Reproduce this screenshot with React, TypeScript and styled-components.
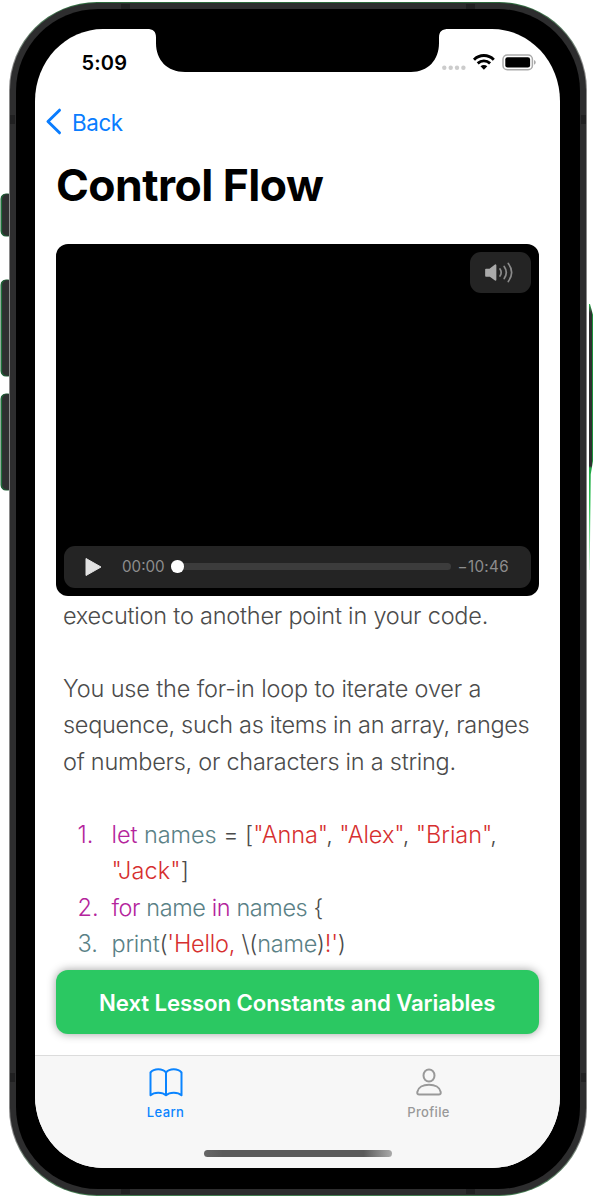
import React from "react";
import styled, { createGlobalStyle, css } from "styled-components";

const Global = createGlobalStyle`
  * { box-sizing: border-box; }
  body { margin: 0; background: #fff; font-family: Inter, "Liberation Sans", sans-serif; }
`;

const Stage = styled.main`
  position: relative;
  width: 594px;
  height: 1197px;
  padding: 2px 7px 1px 9px;
  overflow: hidden;
`;

const SideButton = styled.div<{ $top: number; $height: number }>`
  position: absolute;
  left: 1px;
  top: ${(p) => p.$top}px;
  width: 12px;
  height: ${(p) => p.$height}px;
  border-radius: 5px;
  background: #2f2f30;
  box-shadow: inset 1px 0 1px #1c7a3c, 0 0 0 0.5px #1f5a33;
`;

const PowerButton = styled.div`
  position: absolute;
  left: 588px;
  top: 304px;
  width: 5px;
  height: 266px;
  clip-path: polygon(20% 0, 40% 0, 100% 4%, 100% 59%, 55% 64%, 35% 100%, 20% 100%);
  background: linear-gradient(#2db84f 0, #2f2f30 9px, #2f2f30 162px, #20a544 164px, #2fc355 200px, #c9efd2 266px);
  border-right: 1px solid #1b8f3c;
`;

const Body = styled.div`
  position: relative;
  width: 578px;
  height: 1194px;
  padding: 1px;
  border-radius: 88px;
  background: linear-gradient(#2c6a3c, #8a8a8a 5%, #8a8a8a 95%, #3f7a4d);
`;

const Rim = styled.div`
  height: 100%;
  padding: 6px;
  border-radius: 87px;
  background: #2d2d2e;
`;

const Bezel = styled.div`
  height: 100%;
  padding: 20px 20px 21px 19px;
  border-radius: 82px;
  background: #000;
`;

const Antenna = styled.i<{ $x: number; $y: number; $tall?: boolean }>`
  position: absolute;
  left: ${(p) => p.$x}px;
  top: ${(p) => p.$y}px;
  width: ${(p) => (p.$tall ? 5 : 9)}px;
  height: ${(p) => (p.$tall ? 9 : 5)}px;
  background: #202021;
`;

const Screen = styled.div`
  position: relative;
  display: flex;
  flex-direction: column;
  height: 100%;
  border-radius: 68px / 72px;
  background: #fff;
  overflow: hidden;
`;

const Notch = styled.svg`
  position: absolute;
  left: 112px;
  top: 0;
`;

const StatusBar = styled.header`
  display: flex;
  justify-content: space-between;
  height: 68px;
  padding: 21px 24px 0 46.5px;
`;

const Clock = styled.time`
  padding-top: 1px;
  font-size: 20px;
  line-height: 25px;
  font-weight: 600;
  letter-spacing: 0.2px;
`;

const StatusIcons = styled.div`
  display: flex;
  height: 25px;
`;

const BackLink = styled.a`
  display: flex;
  align-items: center;
  gap: 10px;
  height: 50px;
  padding-left: 10px;
  color: #0a7dff;
  font-size: 22.4px;
  letter-spacing: -0.4px;

  svg {
    margin-top: -1px;
  }
`;

const Title = styled.h1`
  margin: 8px 0 0 21px;
  font-size: 44.5px;
  line-height: 60px;
  font-weight: 700;
  letter-spacing: -0.55px;
`;

const Video = styled.section`
  flex: none;
  display: flex;
  flex-direction: column;
  justify-content: space-between;
  height: 352px;
  margin: 28.5px 21.5px 0 21px;
  padding: 8px;
  border-radius: 12px;
  background: #000;
`;

const panel = css`
  border-radius: 11px;
  background: #242424;
`;

const Volume = styled.button`
  ${panel}
  align-self: flex-end;
  width: 61px;
  height: 41px;
  padding: 0;
  border: 0;
`;

const Controls = styled.div`
  ${panel}
  display: flex;
  align-items: center;
  height: 42px;
  padding: 0 22px 0 21px;
`;

const PlayTime = styled.span<{ $left: number; $width: number; $track?: number }>`
  width: ${(p) => p.$width}px;
  margin-left: ${(p) => p.$left}px;
  color: #8d8d8d;
  font-size: 15.2px;
  letter-spacing: ${(p) => p.$track ?? 0}px;
  white-space: nowrap;
`;

const Track = styled.div`
  flex: 1;
  display: flex;
  align-items: center;
  height: 7px;
  margin-left: 6px;
  border-radius: 4px;
  background: #3c3c3c;
`;

const Knob = styled.div`
  width: 12.5px;
  height: 12.5px;
  border-radius: 50%;
  background: #fff;
`;

const Article = styled.article`
  flex: 1;
  min-height: 0;
  overflow: hidden;
  padding: 2px 10px 0 28px;
  color: #4b4b4b;
  font-size: 23.5px;
  line-height: 36.5px;
  font-weight: 300;
`;

const Paragraph = styled.p`
  margin: 0 0 36.5px;
  white-space: nowrap;
`;

const Line = styled.span<{ $track: number }>`
  display: block;
  letter-spacing: ${(p) => p.$track}px;
`;

const CodeList = styled.ol`
  margin: 0;
  padding: 0 0 0 14.5px;
  list-style: none;
  white-space: nowrap;
`;

const CodeRow = styled.li`
  display: grid;
  grid-template-columns: 34px 1fr;
`;

const tones = { key: "#b4249c", name: "#5a8186", str: "#d62f2f" };

const Token = styled.span<{ $tone: keyof typeof tones }>`
  color: ${(p) => tones[p.$tone]};
`;

const NextButton = styled.button`
  flex: none;
  position: relative;
  height: 64.5px;
  margin: 0 21.5px 21px 21px;
  padding: 1px 0 0;
  border: 0;
  border-radius: 12px;
  background: #2bc862;
  color: #fff;
  font: 600 22.2px Inter, "Liberation Sans", sans-serif;
  letter-spacing: -0.1px;
  white-space: nowrap;
  box-shadow: 0 0 10px rgba(0, 0, 0, 0.38);
`;

const TabBar = styled.nav`
  flex: none;
  display: grid;
  grid-template-columns: 1fr 1fr;
  align-content: space-between;
  height: 113px;
  padding: 12px 0 11px;
  border-top: 1px solid #dcdcdc;
  background: #f7f7f7;
`;

const Tab = styled.a<{ $active?: boolean }>`
  display: flex;
  flex-direction: column;
  align-items: center;
  gap: 6.5px;
  padding-right: ${(p) => (p.$active ? 1.5 : 0.5)}px;
  color: ${(p) => (p.$active ? "#0a84ff" : "#999")};
  font-size: 13px;
  line-height: 17px;
  font-weight: 500;
  letter-spacing: 0.35px;
`;

const HomeBar = styled.div`
  grid-column: 1 / -1;
  justify-self: center;
  width: 188px;
  height: 7px;
  border-radius: 4px;
  background: linear-gradient(90deg, #666, #5a5a5a 10%, #5a5a5a 85%, #aaa);
`;

const K = ({ children }: { children: React.ReactNode }) => <Token $tone="key">{children}</Token>;
const V = ({ children }: { children: React.ReactNode }) => <Token $tone="name">{children}</Token>;
const S = ({ children }: { children: React.ReactNode }) => <Token $tone="str">{children}</Token>;

export default function App() {
  return (
    <Stage>
      <Global />
      <SideButton $top={194} $height={42} />
      <SideButton $top={280} $height={96} />
      <SideButton $top={394} $height={96} />
      <PowerButton />
      <Body>
        <Rim>
          <Bezel>
            <Screen>
              <Notch width="302" height="44" viewBox="0 0 302 44">
                <path d="M0 0C6 0 9 2 9 9V14C9 31 20 43 38 43H264C281 43 292 31 292 14V9C292 2 295 0 302 0Z" fill="#000" />
              </Notch>
              <StatusBar>
                <Clock>5:09</Clock>
                <StatusIcons>
                  <svg width="95" height="25" viewBox="0 0 95 25">
                    <g fill="#ccc">
                      <circle cx="3.3" cy="17.8" r="2.2" />
                      <circle cx="9.7" cy="17.8" r="2.2" />
                      <circle cx="16" cy="17.8" r="2.2" />
                      <circle cx="22.4" cy="17.8" r="2.2" />
                    </g>
                    <g fill="none" stroke="#000" strokeWidth="2.9">
                      <path d="M33 9.7C38.5 4.1 47.3 4.1 52.8 9.7" />
                      <path d="M36.7 13.4C40.3 10 45.5 10 49.1 13.4" />
                    </g>
                    <path d="M39.5 16.3C41.4 14.6 44.4 14.6 46.3 16.3L42.9 19.8Z" />
                    <rect x="62" y="4.9" width="29.4" height="14.8" rx="4.3" fill="none" stroke="#aaa" strokeWidth="1.5" />
                    <rect x="64.3" y="7.2" width="24.8" height="10.2" rx="2.2" />
                    <path d="M93 9.9C95.300 10.8 95.300 13.8 93 14.7Z" fill="#aaa" />
                  </svg>
                </StatusIcons>
              </StatusBar>
              <BackLink>
                <svg width="17" height="27" viewBox="0 0 17 27" fill="none" stroke="currentColor" strokeWidth="3" strokeLinecap="round" strokeLinejoin="round">
                  <path d="M14.5 2.2L3 13.5L14.5 24.8" />
                </svg>
                Back
              </BackLink>
              <Title>Control Flow</Title>
              <Video>
                <Volume aria-label="Volume">
                  <svg width="61" height="41" viewBox="0 0 61 41" fill="none" stroke="#8a8a8a" strokeWidth="1.7" strokeLinecap="round">
                    <path d="M16 17.5H20L25.5 13.2V27.8L20 23.8H16Z" fill="#aaa" stroke="#aaa" strokeLinejoin="round" />
                    <path d="M30 17Q32.4 20.5 30 24M34.2 14.5Q38.4 20.5 34.2 26.5M38.3 11.5Q45 20.5 38.3 29.5" />
                  </svg>
                </Volume>
                <Controls>
                  <svg width="17" height="20" viewBox="0 0 17 20">
                    <path d="M1 1.5L16 10L1 18.5Z" fill="#e2e2e2" stroke="#e2e2e2" strokeLinejoin="round" />
                  </svg>
                  <PlayTime $left={20} $width={43}>00:00</PlayTime>
                  <Track><Knob /></Track>
                  <PlayTime $left={7} $width={51} $track={0.35}>−10:46</PlayTime>
                </Controls>
              </Video>
              <Article>
                <Paragraph><Line $track={-0.22}>execution to another point in your code.</Line></Paragraph>
                <Paragraph>
                  <Line $track={-0.15}>You use the for-in loop to iterate over a</Line>
                  <Line $track={-0.31}>sequence, such as items in an array, ranges</Line>
                  <Line $track={-0.26}>of numbers, or characters in a string.</Line>
                </Paragraph>
                <CodeList>
                  <CodeRow>
                    <K>1.</K>
                    <div>
                      <Line $track={-0.06}><K>let</K> <V>names</V> = [<S>"Anna"</S>, <S>"Alex"</S>, <S>"Brian"</S>,</Line>
                      <Line $track={0.1}><S>"Jack"</S>]</Line>
                    </div>
                  </CodeRow>
                  <CodeRow>
                    <K>2.</K>
                    <Line $track={-0.42}><K>for</K> <V>name</V> <K>in</K> <V>names</V> {"{"}</Line>
                  </CodeRow>
                  <CodeRow>
                    <V>3.</V>
                    <Line $track={-0.25}><V>print</V>(<S>'Hello, </S>\(<V>name</V>)<S>!'</S>)</Line>
                  </CodeRow>
                </CodeList>
              </Article>
              <NextButton>Next Lesson Constants and Variables</NextButton>
              <TabBar>
                <Tab $active>
                  <svg width="34" height="29" viewBox="0 0 34 29" fill="none" stroke="currentColor" strokeWidth="2" strokeLinejoin="round">
                    <path d="M17 4.5C13.5 0.3 5 0.3 1.5 4.5V27.3C5 23.8 13.5 23.8 17 27.3C20.5 23.8 29 23.8 32.5 27.3V4.5C29 0.3 20.5 0.3 17 4.5V27.3" />
                  </svg>
                  Learn
                </Tab>
                <Tab>
                  <svg width="28" height="29" viewBox="0 0 28 29" fill="none" stroke="currentColor" strokeWidth="2">
                    <ellipse cx="14" cy="7.5" rx="5.5" ry="6.1" />
                    <path d="M4.3 26.5H23.7C25.3 26.5 26 25.5 25.7 24C24.8 19.5 20 16.8 14 16.8S3.2 19.5 2.3 24C2 25.5 2.7 26.5 4.3 26.5Z" />
                  </svg>
                  Profile
                </Tab>
                <HomeBar />
              </TabBar>
            </Screen>
          </Bezel>
        </Rim>
        <Antenna $x={112} $y={2} />
        <Antenna $x={457} $y={2} />
        <Antenna $x={112} $y={1187} />
        <Antenna $x={457} $y={1187} />
        <Antenna $x={1} $y={113} $tall />
        <Antenna $x={572} $y={113} $tall />
        <Antenna $x={1} $y={1071} $tall />
        <Antenna $x={572} $y={1071} $tall />
      </Body>
    </Stage>
  );
}
